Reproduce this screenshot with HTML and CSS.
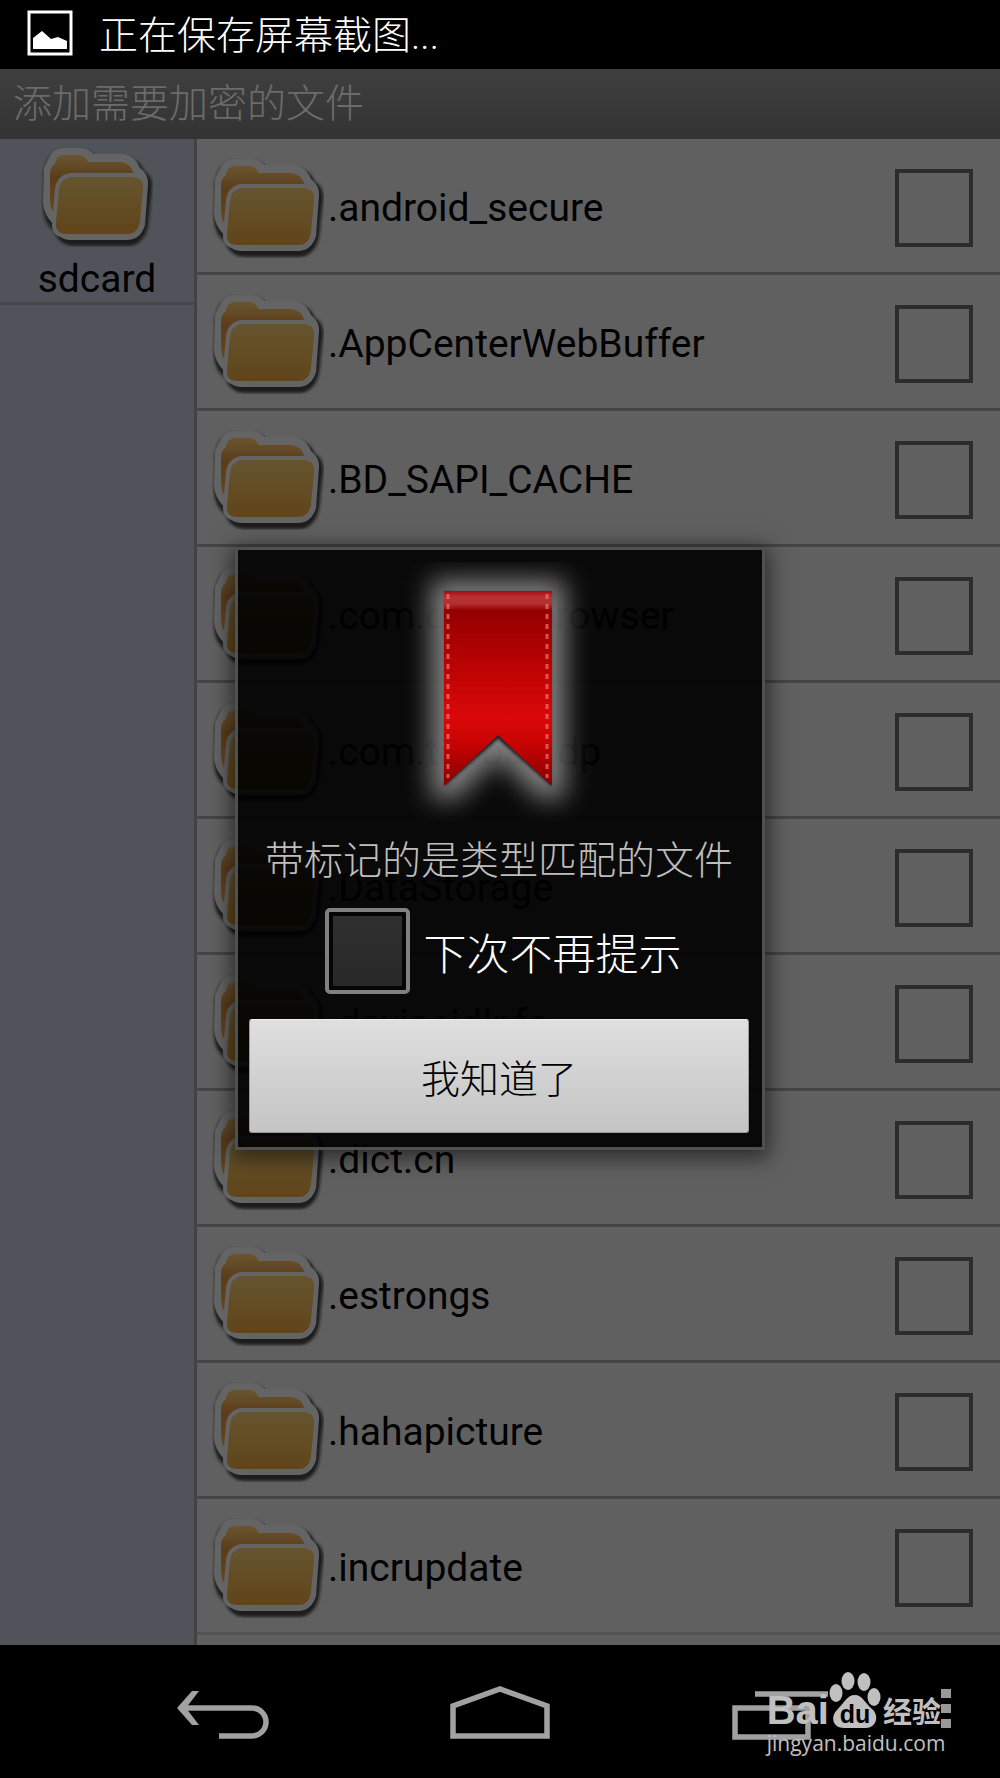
FILE: index.html
```html
<!DOCTYPE html>
<html lang="zh-CN">
<head>
<meta charset="utf-8">
<meta name="viewport" content="width=device-width, initial-scale=1">
<title>添加需要加密的文件</title>
<link rel="stylesheet" href="styles.css">
</head>
<body>
<svg class="defs" aria-hidden="true">
  <defs>
    <linearGradient id="back" x1="0" y1="0" x2="0" y2="1">
      <stop offset="0" stop-color="#6a5530"/><stop offset=".4" stop-color="#5b3c1b"/><stop offset="1" stop-color="#6a451c"/>
    </linearGradient>
    <linearGradient id="front" x1="0" y1="0" x2="0" y2="1">
      <stop offset="0" stop-color="#65552f"/><stop offset="1" stop-color="#61441a"/>
    </linearGradient>
    <filter id="shade" x="-10%" y="-10%" width="125%" height="125%"><feGaussianBlur stdDeviation="1.5"/></filter>
  </defs>
  <symbol id="folder" viewBox="0 0 112 100">
    <path filter="url(#shade)" fill="#1c1c1c" d="M3 24Q7 7 18 3H44Q50 4 54 10H86Q98 12 103 24Q113 30 111 42L107 80Q102 98 88 99H32Q18 98 14 85Q2 76 2 60Z"/>
    <path fill="#646464" d="M3 21Q5 16 8 11Q11 2 21 1H42Q48 2 52 7H83Q94 9 99 21Q108 28 107 38L104 78Q100 92 87 93H28Q16 92 12 77Q3 68 2 56Z"/>
    <path fill="url(#back)" d="M9 26Q10 19 14 17Q15 8 23 8H39Q43 8 47 15H80Q89 16 93 27H28Q18 29 17 39L13 67Q9 60 9 52Z"/>
    <path fill="url(#front)" stroke="#646464" stroke-width="8" paint-order="stroke" stroke-linejoin="round" d="M30 30H91Q103 30 102 42L99 74Q97 87 86 87H26Q14 87 15 76L18 42Q20 31 30 30Z"/>
  </symbol>
</svg>

<div class="status">
  <svg class="status-icon" viewBox="0 0 46 46" aria-hidden="true"><rect x="2" y="2" width="42" height="42" fill="none" stroke="#fff" stroke-width="3"/><path fill="#fff" d="M6 28L15 21L24 29L31 27L40 31V39H6Z"/></svg>
  <span>正在保存屏幕截图...</span>
</div>

<div class="app">
  <header class="title">添加需要加密的文件</header>
  <div class="panes">
    <nav class="side">
      <a class="volume" href="#sdcard"><svg class="folder"><use href="#folder"/></svg><span>sdcard</span></a>
    </nav>
    <main class="files">
      <label class="row"><svg class="folder"><use href="#folder"/></svg><span class="name">.android_secure</span><input class="tick" type="checkbox"></label>
      <label class="row"><svg class="folder"><use href="#folder"/></svg><span class="name">.AppCenterWebBuffer</span><input class="tick" type="checkbox"></label>
      <label class="row"><svg class="folder"><use href="#folder"/></svg><span class="name">.BD_SAPI_CACHE</span><input class="tick" type="checkbox"></label>
      <label class="row"><svg class="folder"><use href="#folder"/></svg><span class="name">.com.qihoo.browser</span><input class="tick" type="checkbox"></label>
      <label class="row"><svg class="folder"><use href="#folder"/></svg><span class="name">.com.taobao.dp</span><input class="tick" type="checkbox"></label>
      <label class="row"><svg class="folder"><use href="#folder"/></svg><span class="name">.DataStorage</span><input class="tick" type="checkbox"></label>
      <label class="row"><svg class="folder"><use href="#folder"/></svg><span class="name">.deviceidInfo</span><input class="tick" type="checkbox"></label>
      <label class="row"><svg class="folder"><use href="#folder"/></svg><span class="name">.dict.cn</span><input class="tick" type="checkbox"></label>
      <label class="row"><svg class="folder"><use href="#folder"/></svg><span class="name">.estrongs</span><input class="tick" type="checkbox"></label>
      <label class="row"><svg class="folder"><use href="#folder"/></svg><span class="name">.hahapicture</span><input class="tick" type="checkbox"></label>
      <label class="row"><svg class="folder"><use href="#folder"/></svg><span class="name">.incrupdate</span><input class="tick" type="checkbox"></label>
    </main>
  </div>

  <div class="overlay">
    <section class="dialog" role="dialog" aria-labelledby="hint">
      <svg class="ribbon" viewBox="0 0 200 260" aria-hidden="true">
        <defs>
          <linearGradient id="red" x1="0" y1="0" x2="0" y2="1">
            <stop offset="0" stop-color="#a80c0c"/><stop offset=".03" stop-color="#b83030"/><stop offset=".065" stop-color="#b23030"/><stop offset=".1" stop-color="#930000"/><stop offset=".4" stop-color="#bd0303"/><stop offset=".65" stop-color="#db0808"/><stop offset=".78" stop-color="#c80303"/><stop offset="1" stop-color="#850000"/>
          </linearGradient>
          <filter id="glow" x="-50%" y="-30%" width="200%" height="160%"><feGaussianBlur stdDeviation="13"/></filter>
          <filter id="edge" x="-20%" y="-20%" width="140%" height="140%"><feGaussianBlur stdDeviation="1.5"/></filter>
        </defs>
        <path filter="url(#glow)" fill="#999" fill-opacity=".85" d="M32 18H166V236L142 238L99 194L56 238L32 236Z"/>
        <path filter="url(#edge)" fill="#222" d="M46 30H152V224L99 177L46 224Z"/>
        <path fill="url(#red)" d="M45 29H153V224L99 173L45 224Z"/>
        <path fill="none" stroke="#f08080" stroke-opacity=".65" stroke-width="3" stroke-dasharray="5 5" d="M49 32V216M148 32V216"/>
      </svg>
      <p class="hint" id="hint">带标记的是类型匹配的文件</p>
      <label class="again"><input class="again-box" type="checkbox"><span>下次不再提示</span></label>
      <button class="ok" type="button">我知道了</button>
    </section>
  </div>
</div>

<footer class="navbar">
  <button class="key" type="button" aria-label="返回"><svg viewBox="0 0 100 60"><path fill="none" stroke="#a1a1a1" stroke-width="5.5" d="M10 22H81A14 14 0 0 1 81 50H48"/><path fill="#a1a1a1" d="M6 22L21 5H28L15 22L28 39H21Z"/></svg></button>
  <button class="key" type="button" aria-label="主屏幕"><svg viewBox="0 0 100 60"><path fill="none" stroke="#a1a1a1" stroke-width="5.5" d="M3 50V20L50 3L97 20V50Z"/></svg></button>
  <button class="key" type="button" aria-label="最近任务"><svg viewBox="0 0 100 60"><path fill="none" stroke="#a1a1a1" stroke-width="5.5" d="M6 22H79V51H6ZM26 8H99"/></svg></button>
  <div class="mark">
    <div class="brand">
      <span class="bai">Bai</span>
      <svg class="paw" viewBox="0 0 52 58" aria-hidden="true"><g fill="#c0c0c0"><ellipse cx="7" cy="22" rx="6.500" ry="9"/><ellipse cx="19" cy="10" rx="6.500" ry="9"/><ellipse cx="35" cy="11" rx="6.500" ry="9"/><ellipse cx="45" cy="26" rx="6.500" ry="9"/><path d="M26 24C33 24 36 32 43 38C51 45 47 57 37 57C31 57 21 57 15 57C4 57 1 46 8 39C15 32 18 24 26 24Z"/></g><text class="du" x="26" y="52" text-anchor="middle">du</text></svg>
      <span class="exp">经验</span>
      <svg class="dots" viewBox="0 0 10 40" aria-hidden="true"><path fill="#999" d="M0 0H10V9H0ZM0 15H10V24H0ZM0 30H10V39H0Z"/></svg>
    </div>
    <a class="url" href="#jingyan">jingyan.baidu.com</a>
  </div>
</footer>
</body>
</html>
```
FILE: styles.css
```css
* { box-sizing: border-box; }

body {
  margin: 0;
  min-height: 100vh;
  display: flex;
  flex-direction: column;
  background: #000;
  color: #000;
  font-family: Roboto, "Noto Sans CJK SC", sans-serif;
  font-size: 39px;
}

a { color: inherit; text-decoration: none; }
input, button { appearance: none; margin: 0; padding: 0; border: 0; font: inherit; }

.defs { position: absolute; width: 0; height: 0; }

.status {
  height: 69px;
  padding: 0 27px 4px;
  display: flex;
  align-items: center;
  gap: 26px;
  color: #fff;
  font-weight: 300;
}
.status span { padding-bottom: 2px; }
.status-icon { width: 46px; height: 46px; }

.app {
  position: relative;
  flex: 1;
  display: flex;
  flex-direction: column;
}

.title {
  height: 70px;
  padding: 0 13px;
  line-height: 70px;
  background: linear-gradient(#3f3f3f, #333);
  color: #6b6b6b;
  font-weight: 300;
}

.panes { flex: 1; display: flex; background: #606060; }

.side {
  width: 197px;
  flex: none;
  background: #50545a;
  border-right: 3px solid #434343;
}
.volume {
  height: 166px;
  padding-top: 8px;
  display: flex;
  flex-direction: column;
  align-items: center;
  border-bottom: 3px solid #444648;
}
.volume span { line-height: 64px; }

.folder { width: 112px; height: 100px; flex: none; }

.files { flex: 1; padding-bottom: 9px; }
.row {
  height: 136px;
  padding: 4px 27px 0 15px;
  display: flex;
  align-items: center;
  gap: 4px;
  border-bottom: 3px solid #454545;
}
.row:last-child { border-color: #535353; }
.name { flex: 1; }
.tick { width: 78px; height: 78px; border: 4px solid #2c2c2c; }

.overlay {
  position: absolute;
  inset: 0;
  display: grid;
  place-content: center;
  padding-bottom: 17px;
}
.dialog {
  width: 530px;
  padding: 12px 13px 14px 11px;
  display: flex;
  flex-direction: column;
  align-items: center;
  background: rgba(0, 0, 0, .9);
  background-clip: padding-box;
  border: 3px solid #505050;
  box-shadow: 0 4px 20px 4px rgba(0, 0, 0, .55);
}
.ribbon { width: 200px; height: 260px; }
.hint {
  margin: 2px 0 0;
  line-height: 74px;
  color: #bebebe;
  font-weight: 300;
}
.again {
  margin: 10px 0 25px;
  padding-left: 8px;
  display: flex;
  align-items: center;
  gap: 14px;
  color: #fff;
  font-size: 43px;
  font-weight: 300;
}
.again-box {
  width: 85px;
  height: 86px;
  border: 4px solid #808080;
  border-radius: 5px;
  background: linear-gradient(#303030, #282828);
  box-shadow: inset 0 0 0 4px #050505;
}
.ok {
  align-self: stretch;
  height: 114px;
  border: 1px solid #999;
  border-top-color: #eee;
  border-radius: 3px;
  background: linear-gradient(#dfdfdf, #c4c4c4);
  color: #000;
  font-weight: 300;
}

.navbar {
  position: relative;
  height: 133px;
  padding: 8px 82px 0;
  display: grid;
  grid-template-columns: repeat(3, 1fr);
  place-items: center;
}
.key { width: 100px; height: 60px; background: none; }
.key svg { display: block; width: 100px; height: 60px; }

.mark {
  position: absolute;
  right: 49px;
  bottom: 21px;
  color: #c0c0c0;
}
.brand { display: flex; align-items: flex-end; }
.bai { font: bold 40px/38px "Liberation Sans", sans-serif; }
.paw { width: 52px; height: 58px; }
.du { font: bold 25px "Liberation Sans", sans-serif; fill: #000; }
.exp { padding-left: 2px; font-size: 29px; line-height: 32px; font-weight: 700; }
.dots { width: 10px; height: 40px; }
.url { display: block; font: 21px/28px "Open Sans", sans-serif; }
```
